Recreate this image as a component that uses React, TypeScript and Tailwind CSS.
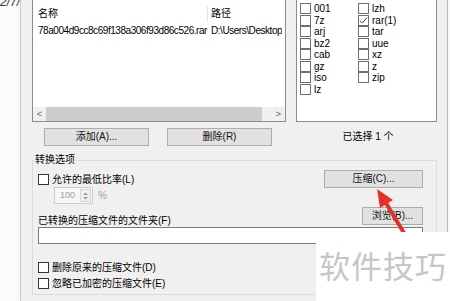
const ui = "font-['Liberation_Sans','Noto_Sans_CJK_SC',sans-serif]";

const formatsLeft = ["001", "7z", "arj", "bz2", "cab", "gz", "iso", "lz"];
const formatsRight = ["lzh", "rar(1)", "tar", "uue", "xz", "z", "zip"];

function Check({ checked = false, light = false }: { checked?: boolean; light?: boolean }) {
  return (
    <span
      className={`flex h-[11px] w-[11px] shrink-0 items-center justify-center border bg-white ${
        light ? "border-[#6f6f6f]" : "border-[#333333]"
      }`}
    >
      {checked && (
        <svg width="9" height="9" viewBox="0 0 9 9">
          <path d="M1 4.6 L3.4 7 L8 1.6" fill="none" stroke="#333" strokeWidth="1" />
        </svg>
      )}
    </span>
  );
}

function Btn({ label, w }: { label: string; w: string }) {
  return (
    <div
      className={`${w} flex h-[18px] items-center justify-center border border-[#adadad] bg-[#e1e1e1] text-[10px] leading-[12px] text-[#111]`}
    >
      {label}
    </div>
  );
}

export default function App() {
  return (
    <div className={`${ui} relative flex h-[301px] w-[450px] overflow-hidden bg-white text-[10px] text-black`}>
      {/* background window */}
      <div className="w-[20px] shrink-0 bg-[#fcfcfc]">
        <div className="-mt-[5px] text-[12px] italic leading-[14px] text-[#333]">2/7/</div>
      </div>
      <div className="w-px shrink-0 bg-[#c9c9c9] shadow-[-2px_0_3px_rgba(0,0,0,0.08)]" />

      {/* dialog */}
      <div className="flex w-[426px] shrink-0 flex-col bg-[#f0f0f0] pl-[11px]">
        <div className="-mt-px flex h-[123px] gap-[10px]">
          {/* file list */}
          <div className="flex w-[254px] flex-col border border-[#8c8c8c] bg-white">
            <div className="flex h-[22px] pt-[6px] leading-[16px]">
              <div className="w-[174px] pl-[5px]">名称</div>
              <div className="h-[16px] w-px bg-[#e5e5e5]" />
              <div className="pl-[3px]">路径</div>
            </div>
            <div className="mt-[2px] flex leading-[14px] tracking-[-0.45px]">
              <div className="w-[175px] overflow-hidden whitespace-nowrap pl-[5px]">78a004d9cc8c69f138a306f93d86c526.rar</div>
              <div className="overflow-hidden whitespace-nowrap pl-[3px]">D:\Users\Desktop</div>
            </div>
            <div className="flex-1" />
            <div className="flex h-[14px] bg-[#f0f0f0] text-[9px] leading-[14px] text-[#606060]">
              <div className="w-[13px] text-center">&lt;</div>
              <div className="w-[216px] bg-[#cdcdcd]" />
              <div className="flex-1" />
              <div className="w-[13px] text-center">&gt;</div>
            </div>
          </div>

          {/* format list */}
          <div className="flex w-[141px] border border-[#8c8c8c] bg-white pl-[3px] pt-[3px]">
            <div className="w-[58px]">
              {formatsLeft.map((f) => (
                <div key={f} className="flex h-[11.5px] items-center gap-[3px] leading-[11px]">
                  <Check light />
                  <span>{f}</span>
                </div>
              ))}
            </div>
            <div>
              {formatsRight.map((f) => (
                <div key={f} className="flex h-[11.5px] items-center gap-[3px] leading-[11px]">
                  <Check light checked={f === "rar(1)"} />
                  <span>{f}</span>
                </div>
              ))}
            </div>
          </div>
        </div>

        <div className="mt-[6px] flex">
          <div className="flex w-[254px] gap-[18px] pl-[12px]">
            <Btn label="添加(A)..." w="w-[105px]" />
            <Btn label="删除(R)" w="w-[105px]" />
          </div>
          <div className="ml-[10px] flex w-[141px] justify-center pl-[3px] pt-[3px] leading-[12px]">已选择 1 个</div>
        </div>

        {/* options group */}
        <fieldset className="mt-[8px] h-[141px] w-[405px] border border-[#dcdcdc] pl-[5px] pr-[13px]">
          <legend className="ml-[-4px] px-[1px] leading-[12px]">转换选项</legend>
          <div className="mt-[4px] flex items-start justify-between">
            <div className="flex h-[18px] items-center gap-[3px]">
              <Check />
              <span>允许的最低比率(L)</span>
            </div>
            <Btn label="压缩(C)..." w="w-[99px]" />
          </div>
          <div className="-mt-px ml-[16px] flex items-center gap-[5px] text-[#a0a0a0]">
            <div className="flex h-[17px] w-[39px] items-center border border-[#cccccc] bg-[#f7f7f7]">
              <span className="w-[25px] text-center text-[9px]">100</span>
              <div className="flex h-[13px] w-[11px] flex-col items-center justify-center border border-[#d6d6d6] bg-[#f0f0f0]">
                <svg width="7" height="10" viewBox="0 0 7 10">
                  <path d="M1 4 L3.5 1.5 L6 4 Z M1 6 L3.5 8.5 L6 6 Z" fill="#9a9a9a" />
                </svg>
              </div>
            </div>
            <span>%</span>
          </div>
          <div className="mt-[2px] flex h-[21px] items-start justify-between">
            <span className="self-end leading-[12px]">已转换的压缩文件的文件夹(F)</span>
            <div className="pt-[1px]">
              <Btn label="浏览(B)..." w="w-[61px]" />
            </div>
          </div>
          <div className="h-[17px] border border-[#7a7a7a] bg-white" />
          <div className="mt-[15px] flex h-[16px] items-center gap-[3px]">
            <Check />
            <span>删除原来的压缩文件(D)</span>
          </div>
          <div className="flex h-[16px] items-center gap-[3px]">
            <Check />
            <span>忽略已加密的压缩文件(E)</span>
          </div>
        </fieldset>
      </div>
      <div className="w-px shrink-0 bg-[#b9b9b9]" />
      <div className="flex-1 bg-[#fafafa]" />

      {/* red arrow annotation */}
      <svg className="pointer-events-none absolute left-0 top-0" width="450" height="301" viewBox="0 0 450 301">
        <line x1="386" y1="203" x2="407" y2="238" stroke="#e5302a" strokeWidth="4" />
        <path d="M377 189 L393 200 L380 208 Z" fill="#e5302a" />
      </svg>

      {/* watermark */}
      <div className="absolute bottom-0 right-0 flex h-[69px] w-[134px] items-center justify-center bg-white pt-[2px] text-[31px] leading-[36px] tracking-[1px] text-[#c6c6c6]">
        软件技巧
      </div>
    </div>
  );
}
